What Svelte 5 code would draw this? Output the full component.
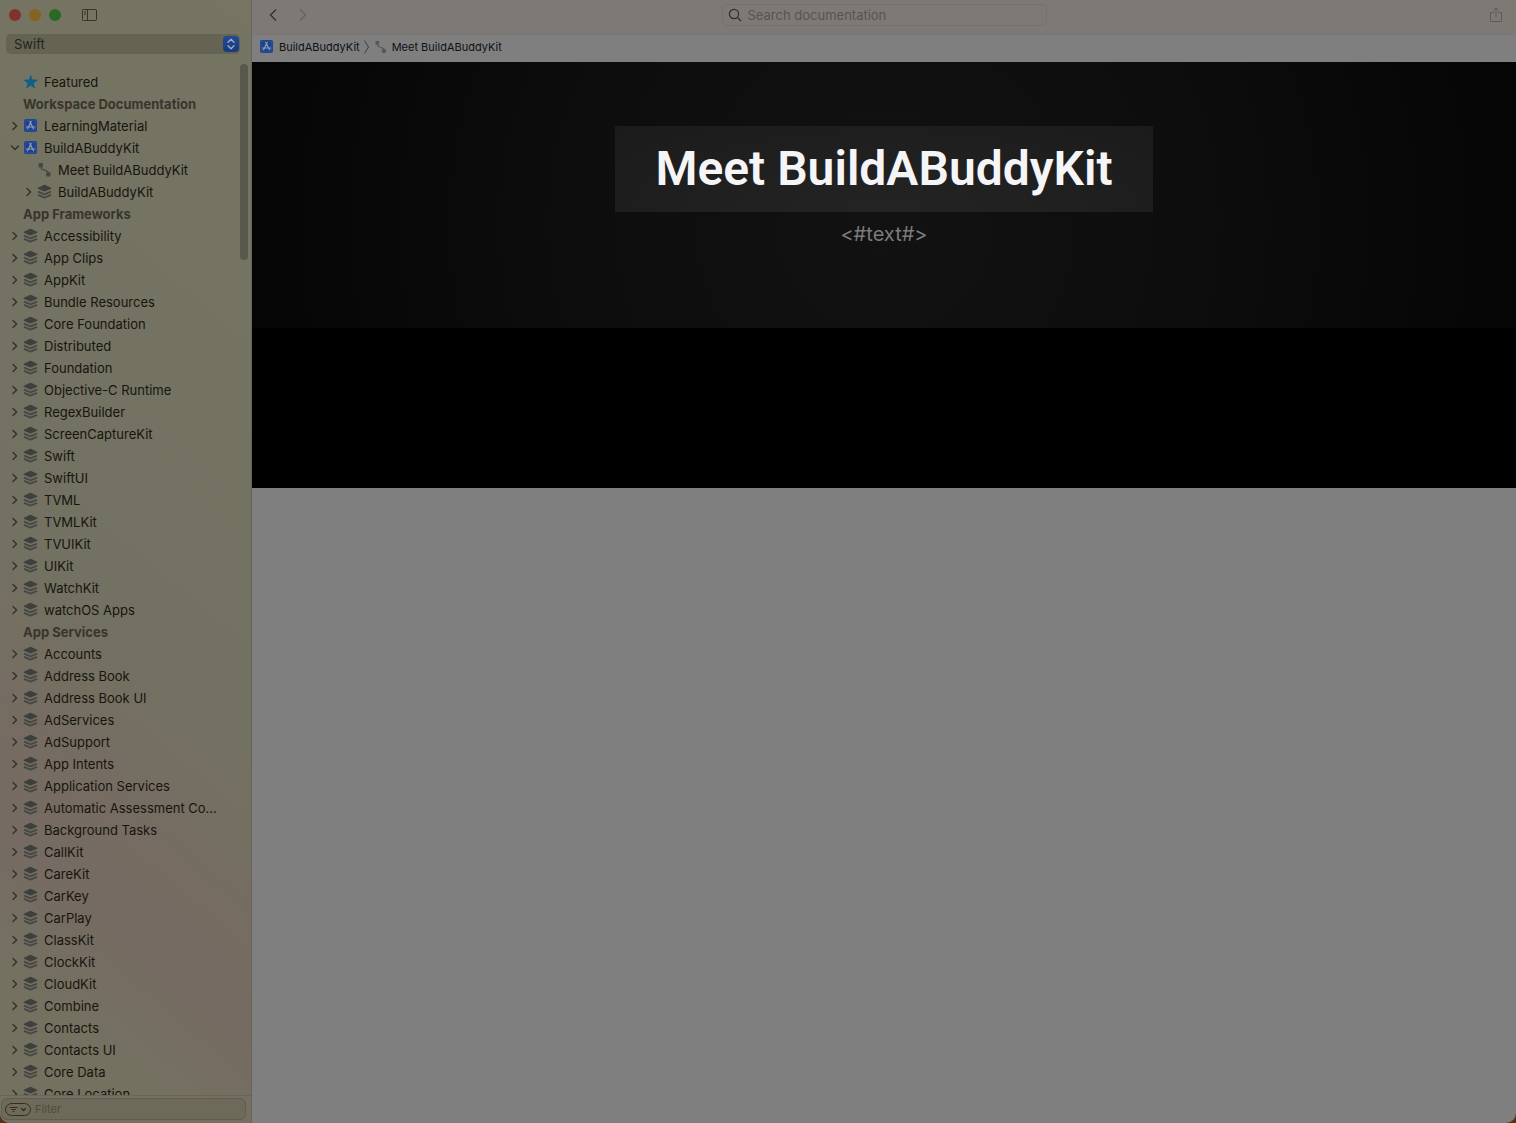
<script>
  const groups = [
    {
      title: 'Workspace Documentation',
      items: [
        { label: 'LearningMaterial', icon: 'app' },
        { label: 'BuildABuddyKit', icon: 'app', open: true },
        { label: 'Meet BuildABuddyKit', icon: 'path', nested: true, leaf: true },
        { label: 'BuildABuddyKit', icon: 'stack', nested: true },
      ],
    },
    {
      title: 'App Frameworks',
      items: [
        'Accessibility', 'App Clips', 'AppKit', 'Bundle Resources', 'Core Foundation',
        'Distributed', 'Foundation', 'Objective-C Runtime', 'RegexBuilder',
        'ScreenCaptureKit', 'Swift', 'SwiftUI', 'TVML', 'TVMLKit', 'TVUIKit', 'UIKit',
        'WatchKit', 'watchOS Apps',
      ].map((label) => ({ label, icon: 'stack' })),
    },
    {
      title: 'App Services',
      items: [
        'Accounts', 'Address Book', 'Address Book UI', 'AdServices', 'AdSupport',
        'App Intents', 'Application Services', 'Automatic Assessment Co...',
        'Background Tasks', 'CallKit', 'CareKit', 'CarKey', 'CarPlay', 'ClassKit',
        'ClockKit', 'CloudKit', 'Combine', 'Contacts', 'Contacts UI', 'Core Data',
        'Core Location',
      ].map((label) => ({ label, icon: 'stack' })),
    },
  ];
</script>

{#snippet glyph(name)}
  {#if name === 'app'}
    <svg class="glyph" viewBox="0 0 16 16" aria-hidden="true">
      <rect x="1" y="1" width="13" height="13" rx="2" fill="#1d438f" />
      <rect x="2.200" y="2.200" width="10.600" height="10.600" rx="1" fill="none" stroke="#3c5a98" stroke-width=".6" />
      <path d="M8.200 3.600 4.600 10.800M6.800 3.600l3.700 7.200M3.400 9h5M10.200 9h1.500" fill="none" stroke="#919cb0" stroke-width="1.200" stroke-linecap="round" />
    </svg>
  {:else if name === 'path'}
    <svg class="glyph path" viewBox="0 0 16 16" fill="currentColor" aria-hidden="true">
      <rect x="1.600" y="1" width="4.400" height="4.400" rx="1" />
      <rect x="9" y="10" width="4.600" height="4.800" rx="1.800" />
      <path d="M4 5v.6c0 1.700 1 2 3.400 2.600s3.800 1.200 3.800 3" fill="none" stroke="currentColor" stroke-width="1.200" />
    </svg>
  {:else}
    <svg class="glyph" viewBox="0 0 16 16" aria-hidden="true">
      <path d="M7.500 1.400 13.800 4.200 7.500 7 1.200 4.200Z" fill="#3e403d" stroke="#3e403d" stroke-width="1.200" stroke-linejoin="round" />
      <path d="m1 7.600 6.500 2.700L14 7.600M1 10.900l6.500 2.700 6.500-2.700" fill="none" stroke="#464844" stroke-width="1.800" stroke-linejoin="round" />
    </svg>
  {/if}
{/snippet}

<div class="window">
  <aside>
    <div class="titlebar">
      <button class="light red" aria-label="Close"></button>
      <button class="light amber" aria-label="Minimize"></button>
      <button class="light green" aria-label="Zoom"></button>
      <button class="plain toggle" aria-label="Toggle sidebar">
        <svg width="15" height="12" viewBox="0 0 15 12" fill="none" stroke="#35332a">
          <rect x=".5" y=".5" width="14" height="11" rx="1" />
          <path d="M5.500 .5v11M2 3h2M2 5h2" />
        </svg>
      </button>
    </div>

    <div class="picker">
      <select aria-label="Language">
        <option>Swift</option>
        <option>Objective-C</option>
      </select>
      <span class="stepper">
        <svg width="16" height="16" viewBox="0 0 16 16" fill="none" stroke="#a3acbb" stroke-width="1.400" stroke-linecap="round" stroke-linejoin="round">
          <path d="m5 6.200 3-3 3 3M5 9.800l3 3 3-3" />
        </svg>
      </span>
    </div>

    <nav aria-label="Documentation">
      <a class="row" href="#featured">
        <span class="chevron"></span>
        <svg class="glyph" viewBox="0 0 16 16" aria-hidden="true">
          <path d="m7.700 .5 1.800 5.100 5.600.2-4.400 3.400 1.600 5.500-4.600-3.200L3 14.700l1.600-5.500L.3 5.800l5.600-.2Z" fill="#0d6186" />
        </svg>
        <span>Featured</span>
      </a>
      {#each groups as group}
        <h2>{group.title}</h2>
        {#each group.items as item}
          <a class="row" class:nested={item.nested} href="#doc">
            <span class="chevron" class:open={item.open}>
              {#if !item.leaf}
                <svg width="8" height="10" viewBox="0 0 8 10" fill="none" stroke="#33312a" stroke-width="1.400" stroke-linecap="round" stroke-linejoin="round">
                  <path d="m2 1.500 3.600 3.500L2 8.500" />
                </svg>
              {/if}
            </span>
            {@render glyph(item.icon)}
            <span>{item.label}</span>
          </a>
        {/each}
      {/each}
    </nav>
    <span class="scrollbar"></span>

    <footer>
      <div class="filter">
        <button class="plain" aria-label="Filter options">
          <svg width="26" height="13" viewBox="0 0 26 13" fill="none" stroke="#302e26" stroke-linecap="round">
            <rect x=".5" y=".5" width="25" height="12" rx="6" />
            <path d="M5 4.500h7M6.500 6.500h4M8 8.500h1" />
            <path d="m16.500 5.500 2 2 2-2" stroke-width="1.300" />
          </svg>
        </button>
        <input type="text" placeholder="Filter" aria-label="Filter" />
      </div>
    </footer>
  </aside>

  <main>
    <header>
      <div class="history">
        <button class="plain" aria-label="Back">
          <svg width="10" height="14" viewBox="0 0 10 14" fill="none" stroke="#33302e" stroke-width="1.300"><path d="M8 1.500 2.500 7 8 12.500" /></svg>
        </button>
        <button class="plain" aria-label="Forward" disabled>
          <svg width="10" height="14" viewBox="0 0 10 14" fill="none" stroke="#65615e" stroke-width="1.300"><path d="M2 1.500 7.500 7 2 12.500" /></svg>
        </button>
      </div>
      <label class="search">
        <svg width="14" height="14" viewBox="0 0 14 14" fill="none" stroke="#2e2c2a" stroke-width="1.200"><circle cx="6" cy="6" r="4.600" /><path d="m9.300 9.300 3.700 3.700" /></svg>
        <input type="search" placeholder="Search documentation" aria-label="Search documentation" />
      </label>
      <button class="plain share" aria-label="Share">
        <svg width="12" height="15" viewBox="0 0 12 15" fill="none" stroke="#5c5956"><path d="M4 5.500H.5v9h11v-9H8M6 10V1M3.500 3.500 6 1l2.500 2.500" /></svg>
      </button>
    </header>

    <div class="crumbs">
      <a href="#kit">{@render glyph('app')}<span>BuildABuddyKit</span></a>
      <svg width="8" height="14" viewBox="0 0 8 14" fill="none" stroke="#3d3d3d"><path d="M1.500 .5 5.500 7l-4 6.500" /></svg>
      <a href="#meet">{@render glyph('path')}<span>Meet BuildABuddyKit</span></a>
    </div>

    <section class="hero">
      <h1>Meet BuildABuddyKit</h1>
      <p>&lt;#text#&gt;</p>
    </section>
    <div class="band"></div>
  </main>
</div>

<style>
  :global(body) {
    background: #5a2f14;
  }
  .window {
    display: grid;
    grid-template-columns: 252px 1fr;
    height: 100vh;
    overflow: hidden;
    border-radius: 0 0 10px 10px;
    background: #7f7f7f;
    font-family: Inter, 'Liberation Sans', sans-serif;
    font-size: 13px;
    color: #16150e;
  }
  a {
    color: inherit;
    text-decoration: none;
  }
  input {
    flex: 1;
    min-width: 0;
    padding: 0;
    border: 0;
    outline: 0;
    background: none;
    font: inherit;
    color: inherit;
  }
  .plain {
    display: flex;
    padding: 0;
    border: 0;
    background: none;
  }

  aside {
    position: relative;
    display: flex;
    flex-direction: column;
    box-sizing: border-box;
    min-height: 0;
    border-right: 1px solid #67655a;
    background: linear-gradient(220deg, #767463, #737161 56%, #766c62 70%, #766b62 78%, #747161 88%, #737160);
  }
  .titlebar {
    display: flex;
    align-items: center;
    gap: 8px;
    height: 30px;
    padding-left: 9px;
  }
  .light {
    width: 12px;
    height: 12px;
    padding: 0;
    border: 0;
    border-radius: 50%;
  }
  .red {
    background: #80332e;
  }
  .amber {
    background: #84621f;
  }
  .green {
    background: #286a22;
  }
  .toggle {
    margin-left: 13px;
  }
  .picker {
    display: flex;
    align-items: center;
    box-sizing: border-box;
    height: 20px;
    margin: 4px 11px 0 6px;
    padding-right: 1px;
    border-radius: 5px;
    background: #656354;
  }
  select {
    flex: 1;
    appearance: none;
    padding: 0 8px;
    border: 0;
    background: none;
    font: inherit;
    color: #24231d;
  }
  .stepper {
    display: flex;
    border-radius: 4px;
    background: linear-gradient(#214b97, #173a80);
  }
  nav {
    flex: 1;
    min-height: 0;
    overflow: hidden;
    padding-top: 17px;
  }
  .row {
    display: flex;
    align-items: center;
    height: 22px;
    padding-left: 9px;
    white-space: nowrap;
  }
  .nested {
    padding-left: 23px;
  }
  .chevron {
    display: flex;
    justify-content: center;
    width: 12px;
    margin-right: 2px;
  }
  .open {
    transform: rotate(90deg);
  }
  .glyph {
    flex: none;
    width: 16px;
    height: 16px;
    margin-right: 5px;
  }
  .path {
    color: #484845;
  }
  h2 {
    margin: 0;
    padding-left: 23px;
    font-size: 13px;
    font-weight: 700;
    line-height: 22px;
    color: #38362b;
  }
  .scrollbar {
    position: absolute;
    top: 64px;
    right: 3px;
    width: 8px;
    height: 196px;
    border-radius: 4px;
    background: #5a584d;
  }
  footer {
    padding: 2px 5px 3px 1px;
    border-top: 1px solid #68665a;
  }
  .filter {
    display: flex;
    align-items: center;
    gap: 4px;
    height: 20px;
    padding-left: 3px;
    border: 1px solid #5f5d50;
    border-radius: 6px;
    background: #6d6a59;
    font-size: 11px;
  }
  .filter input::placeholder {
    color: #4d4b40;
    opacity: 1;
  }

  main {
    display: flex;
    flex-direction: column;
    min-width: 0;
  }
  header {
    display: grid;
    grid-template-columns: 1fr 325px 1fr;
    align-items: center;
    box-sizing: border-box;
    height: 35px;
    padding: 0 14px 5px;
    border-bottom: 1px solid #7b7775;
    background: #7f7976;
  }
  .history {
    display: flex;
    gap: 20px;
    padding-left: 2px;
  }
  .search {
    display: flex;
    align-items: center;
    gap: 6px;
    box-sizing: border-box;
    height: 22px;
    padding: 0 5px;
    border: 1px solid #76716e;
    border-radius: 5px;
  }
  .search input::placeholder {
    color: #575451;
    opacity: 1;
  }
  .share {
    justify-self: end;
  }
  .crumbs {
    display: flex;
    align-items: center;
    gap: 3px;
    box-sizing: border-box;
    height: 27px;
    padding: 0 7px 3px;
    font-size: 11px;
    color: #111;
  }
  .crumbs a {
    display: flex;
    align-items: center;
  }
  .crumbs :is(.glyph) {
    margin-right: 4px;
  }
  .crumbs .path {
    width: 14px;
    height: 14px;
    color: #575757;
  }
  .hero {
    display: flex;
    flex-direction: column;
    align-items: center;
    box-sizing: border-box;
    height: 266px;
    padding-top: 64px;
    background: radial-gradient(ellipse 50% 240% at 50% 60%, #121212, #0d0d0d 50%, #050505);
  }
  h1 {
    margin: 0;
    padding: 0 40px;
    background: radial-gradient(ellipse at 50% 100%, #242424, #1b1b1b);
    font-family: Roboto, Inter, sans-serif;
    font-size: 48px;
    font-weight: 600;
    line-height: 86px;
    color: #f5f5f7;
  }
  p {
    margin: 8px 0 0;
    font-size: 20px;
    line-height: 28px;
    color: #7b7b7b;
  }
  .band {
    height: 160px;
    background: #000;
  }
</style>
